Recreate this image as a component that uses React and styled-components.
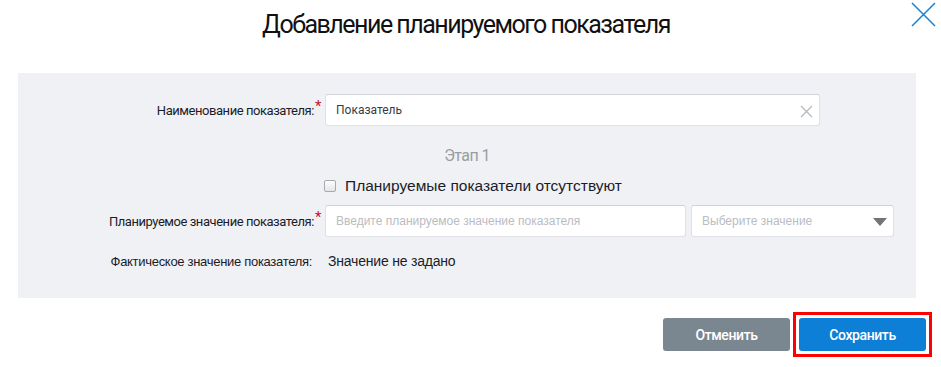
import React from "react";
import styled, { createGlobalStyle } from "styled-components";

const Global = createGlobalStyle`
  html, body { margin: 0; padding: 0; background: #fff; }
  body { font-family: Roboto, "Liberation Sans", sans-serif; color: #1c1c28; }
  * { box-sizing: border-box; }
`;

const Dialog = styled.div`
  position: relative;
  width: 941px;
  height: 367px;
  background: #fff;
`;

const Header = styled.header`
  height: 73px;
  display: flex;
  align-items: flex-start;
  justify-content: center;
  padding-top: 10px;
`;

const Title = styled.h1`
  margin: 0;
  font-family: Roboto, sans-serif;
  font-weight: 400;
  font-size: 25px;
  line-height: 29px;
  letter-spacing: -1.5px;
  color: #111;
  padding-right: 9px;
`;

const CloseButton = styled.button`
  position: absolute;
  top: 2px;
  right: 5px;
  width: 25px;
  height: 25px;
  padding: 0;
  border: none;
  background: none;
  cursor: pointer;
  display: flex;
`;

const Panel = styled.section`
  margin: 0 25px 0 18px;
  height: 225px;
  background: #f0f1f5;
  padding-top: 21px;
  display: flex;
  flex-direction: column;
`;

const Row = styled.div`
  display: flex;
  align-items: center;
  height: ${(p) => p.$h || 32}px;
  margin-top: ${(p) => p.$mt || 0}px;
`;

const Label = styled.label`
  width: 307px;
  flex: none;
  text-align: right;
  padding-right: ${(p) => (p.$req ? 4 : 13)}px;
  font-family: ${(p) => (p.$plain ? '"Liberation Sans", Arial' : "Roboto")}, sans-serif;
  font-size: 13px;
  letter-spacing: ${(p) => (p.$plain ? "-0.3px" : "-0.45px")};
  color: #1c1c28;
  white-space: nowrap;
`;

const Star = styled.sup`
  color: #c8102e;
  font-size: 15px;
  line-height: 0;
  position: relative;
  top: 2px;
  margin-left: 1px;
`;

const Field = styled.div`
  position: relative;
  width: ${(p) => p.$w}px;
  height: ${(p) => p.$h || 32}px;
  margin-left: ${(p) => p.$ml || 0}px;
  background: #fff;
  border: 1px solid #dfe1e6;
  border-top-color: #cfd2d8;
  border-radius: 3px;
  display: flex;
  align-items: center;
  padding: 0 10px;
  font-family: ${(p) => (p.$roboto ? "Roboto" : '"Liberation Sans", Arial')}, sans-serif;
  font-size: 12px;
  color: ${(p) => (p.$placeholder ? "#b9bcc2" : "#3a3a44")};
`;

const ClearIcon = styled.svg`
  position: absolute;
  right: 6px;
  top: 10px;
`;

const Caret = styled.span`
  position: absolute;
  right: 6px;
  top: 12px;
  width: 0;
  height: 0;
  border-left: 7px solid transparent;
  border-right: 7px solid transparent;
  border-top: 8px solid #707378;
`;

const Stage = styled.div`
  margin-top: 14px;
  height: 30px;
  display: flex;
  align-items: center;
  justify-content: center;
  font-family: Roboto, sans-serif;
  font-size: 16px;
  letter-spacing: -0.6px;
  color: #9a9ca2;
`;

const CheckRow = styled.label`
  margin-top: 4px;
  height: 24px;
  display: flex;
  align-items: center;
  padding-left: 306px;
  font-family: "Liberation Sans", Arial, sans-serif;
  font-size: 15.5px;
  color: #1c1c28;
`;

const Box = styled.span`
  width: 12px;
  height: 12px;
  border: 1px solid #a8a8ae;
  border-radius: 2px;
  background: linear-gradient(#fdfdfd, #e6e6e8);
  margin-right: 9px;
`;

const Value = styled.span`
  margin-left: 3px;
  font-family: "Liberation Sans", Arial, sans-serif;
  font-size: 14px;
  letter-spacing: -0.2px;
  color: #1c1c28;
`;

const Footer = styled.footer`
  display: flex;
  align-items: center;
  justify-content: flex-end;
  gap: 3px;
  padding: 14px 9px 0 0;
`;

const Highlight = styled.span`
  display: inline-flex;
  padding: 3px;
  border: 3px solid #ff0000;
`;

const Button = styled.button`
  width: 127px;
  height: 33px;
  border: none;
  border-radius: 3px;
  background: ${(p) => (p.$primary ? "#0e7fd6" : "#7a8791")};
  color: #fff;
  font-family: Roboto, sans-serif;
  font-weight: 500;
  font-size: 14px;
  letter-spacing: -0.4px;
  cursor: pointer;
`;

export default function App() {
  return (
    <>
      <Global />
      <Dialog>
        <Header>
          <Title>Добавление планируемого показателя</Title>
        </Header>
        <CloseButton aria-label="Закрыть">
          <svg width="25" height="25" viewBox="0 0 25 25">
            <path d="M1 1 L24 24 M24 1 L1 24" stroke="#1a7fd1" strokeWidth="1.5" fill="none" />
          </svg>
        </CloseButton>
        <Panel>
          <Row $h={32}>
            <Label $req>
              Наименование показателя:<Star>*</Star>
            </Label>
            <Field $w={495} $roboto>
              Показатель
              <ClearIcon width="13" height="13" viewBox="0 0 13 13">
                <path d="M1 1 L12 12 M12 1 L1 12" stroke="#b3bac2" strokeWidth="1.3" fill="none" />
              </ClearIcon>
            </Field>
          </Row>
          <Stage>Этап 1</Stage>
          <CheckRow>
            <Box />
            Планируемые показатели отсутствуют
          </CheckRow>
          <Row $h={32} $mt={7}>
            <Label $req>
              Планируемое значение показателя:<Star>*</Star>
            </Label>
            <Field $w={361} $placeholder>
              Введите планируемое значение показателя
            </Field>
            <Field $w={203} $ml={5} $placeholder>
              Выберите значение
              <Caret />
            </Field>
          </Row>
          <Row $h={24} $mt={12}>
            <Label $plain>Фактическое значение показателя:</Label>
            <Value>Значение не задано</Value>
          </Row>
        </Panel>
        <Footer>
          <Button>Отменить</Button>
          <Highlight>
            <Button $primary>Сохранить</Button>
          </Highlight>
        </Footer>
      </Dialog>
    </>
  );
}
